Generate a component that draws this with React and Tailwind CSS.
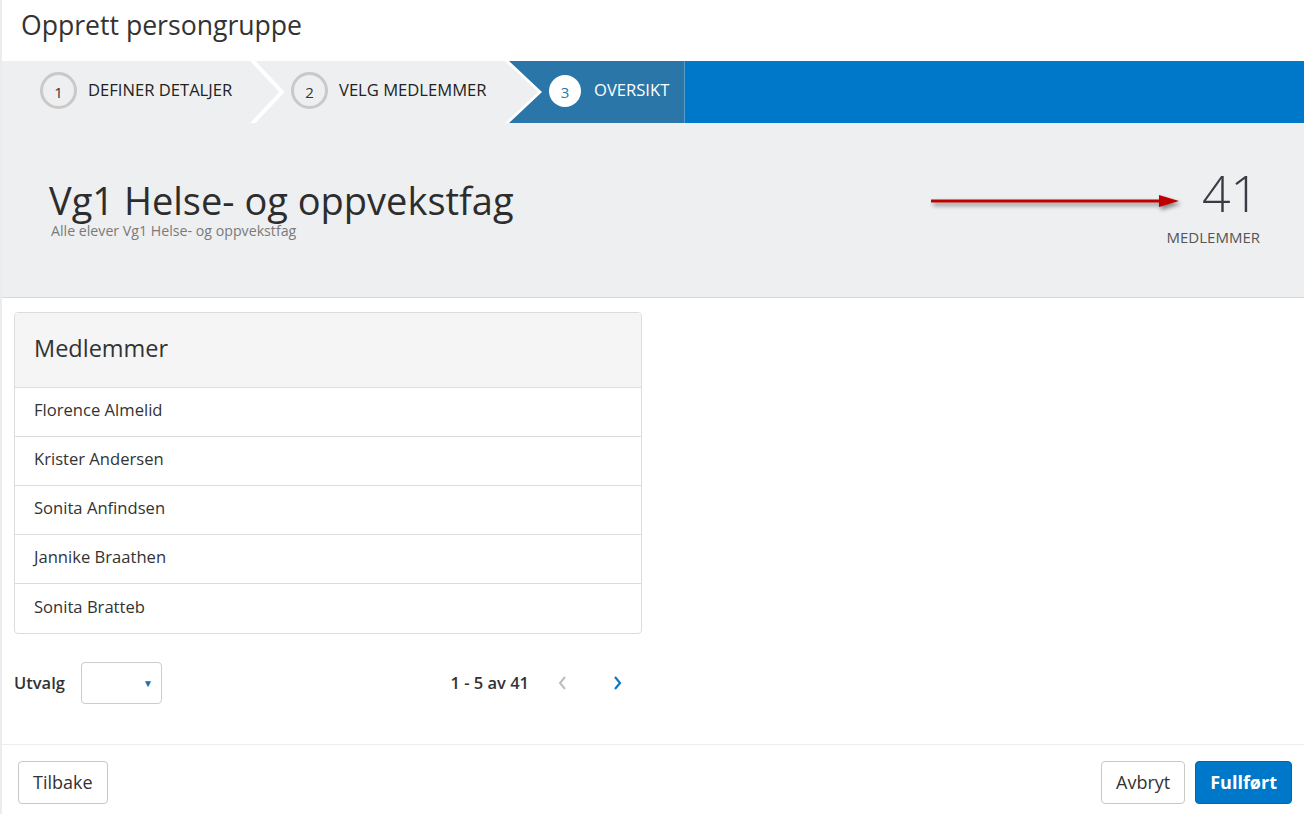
import React from 'react';

const members = [
    'Florence Almelid',
    'Krister Andersen',
    'Sonita Anfindsen',
    'Jannike Braathen',
    'Sonita Bratteb',
];

const StepCircle = ({ n }) => (
    <div className="w-[37px] h-[37px] shrink-0 rounded-full border-[3px] border-[#c9c9c9] flex items-center justify-center pt-[3px] text-[15px] text-[#333]">
        {n}
    </div>
);

const App = () => {
    return (
        <div className="w-full h-[814px] bg-white border-l-2 border-[#ececec] flex flex-col font-['Open_Sans',sans-serif] text-[#333] overflow-hidden">

            {/* -- PAGE TITLE -- */}
            <div className="h-[61px] flex items-center pl-[19px] pb-[10px]">
                <h1 className="text-[26.6px] text-[#333]">Opprett persongruppe</h1>
            </div>

            {/* -- STEPPER -- */}
            <div className="flex h-[62px]">
                <div className="flex items-center w-[246px] bg-[#eeeff1] pl-[38px] pb-[3px] gap-[11px]">
                    <StepCircle n={1} />
                    <span className="text-[16.6px] text-[#222]">DEFINER DETALJER</span>
                </div>
                <svg width="36" height="62" className="shrink-0 bg-[#eeeff1]">
                    <polyline points="2,-3 34,31 2,65" fill="none" stroke="#ffffff" strokeWidth="4" />
                </svg>
                <div className="flex items-center w-[221px] bg-[#eeeff1] pl-[7px] pb-[3px] gap-[11px]">
                    <StepCircle n={2} />
                    <span className="text-[16.6px] text-[#222]">VELG MEDLEMMER</span>
                </div>
                <div className="w-[179px] bg-[#eeeff1]">
                    <div className="h-full bg-white [clip-path:polygon(0_0,100%_0,100%_100%,0_100%,33px_50%)]">
                        <div className="h-full flex items-center bg-[#2b76a8] pl-[44px] pb-[3px] gap-[13px] [clip-path:polygon(4px_0,100%_0,100%_100%,4px_100%,37px_50%)]">
                            <div className="w-[32px] h-[32px] rounded-full bg-white flex items-center justify-center pt-[3px] text-[15px] text-[#2b76a8]">
                                3
                            </div>
                            <span className="text-[16.6px] text-white">OVERSIKT</span>
                        </div>
                    </div>
                </div>
                <div className="w-px bg-[#5a9cc9]" />
                <div className="flex-1 bg-[#0078c9]" />
            </div>

            {/* -- GROUP SUMMARY -- */}
            <div className="h-[175px] bg-[#eeeff1] border-b border-[#d8d8d8] flex items-center justify-between pl-[47px] pr-[44px]">
                <div className="flex flex-col">
                    <h2 className="text-[38px] leading-[38px] text-[#2d2d2d]">Vg1 Helse- og oppvekstfag</h2>
                    <p className="text-[14.2px] leading-[16px] text-[#7a7a7a] pl-[2px] mt-[4px]">Alle elever Vg1 Helse- og oppvekstfag</p>
                </div>
                <div className="flex flex-col items-end pb-[6px]">
                    <div className="flex items-center">
                        <svg width="256" height="16" className="drop-shadow-[2px_3px_2px_rgba(0,0,0,0.45)] mt-[18px]">
                            <line x1="2" y1="7" x2="234" y2="7" stroke="#c00000" strokeWidth="3" />
                            <polygon points="230,1 250,7 230,13" fill="#c00000" />
                        </svg>
                        <span className="ml-[17px] mr-[1px] text-[50px] leading-[56px] font-light text-[#3a3a44]">41</span>
                    </div>
                    <span className="mt-[5px] text-[15px] text-[#555]">MEDLEMMER</span>
                </div>
            </div>

            {/* -- MEMBER LIST -- */}
            <div className="px-[12px] pt-[14px]">
                <div className="w-[628px] border border-[#dcdcdc] rounded-[4px] overflow-hidden">
                    <div className="h-[75px] bg-[#f5f5f5] border-b border-[#dcdcdc] flex items-center px-[19px] pb-[3px]">
                        <h3 className="text-[23.5px] text-[#333]">Medlemmer</h3>
                    </div>
                    {members.map((name, i) => (
                        <div
                            key={name}
                            className={`h-[49px] flex items-center px-[19px] pb-[3px] text-[16.6px] text-[#333] ${i < members.length - 1 ? 'border-b border-[#dcdcdc]' : ''}`}
                        >
                            {name}
                        </div>
                    ))}
                </div>

                {/* -- PAGINATION -- */}
                <div className="w-[628px] mt-[28px] flex items-center justify-between">
                    <div className="flex items-center gap-[16px]">
                        <span className="text-[16.5px] font-semibold text-[#333]">Utvalg</span>
                        <div className="w-[81px] h-[42px] border border-[#cccccc] rounded-[4px] flex items-center justify-end pr-[8px]">
                            <span className="text-[10px] text-[#2a6aa0]">▼</span>
                        </div>
                    </div>
                    <div className="flex items-center pr-[19px]">
                        <span className="text-[16.5px] font-semibold text-[#333]">1 - 5 av 41</span>
                        <svg width="10" height="16" viewBox="0 0 10 16" className="ml-[28px]">
                            <polyline points="8,2 3,8 8,14" fill="none" stroke="#bdbdbd" strokeWidth="2" />
                        </svg>
                        <svg width="10" height="16" viewBox="0 0 10 16" className="ml-[46px]">
                            <polyline points="2,2 7,8 2,14" fill="none" stroke="#0b78c5" strokeWidth="2.2" />
                        </svg>
                    </div>
                </div>
            </div>

            {/* -- FOOTER -- */}
            <div className="mt-auto border-t border-[#eeeeee] h-[70px] flex items-center justify-between pl-[16px] pr-[12px] pt-[6px]">
                <button className="h-[43px] px-[14px] border border-[#c9c9c9] rounded-[4px] bg-white text-[18px] text-[#333]">
                    Tilbake
                </button>
                <div className="flex items-center gap-[10px]">
                    <button className="h-[43px] px-[14px] border border-[#c9c9c9] rounded-[4px] bg-white text-[18px] text-[#333]">
                        Avbryt
                    </button>
                    <button className="h-[43px] px-[14px] border border-[#0a66a8] rounded-[4px] bg-[#0078c9] text-[18px] font-bold text-white">
                        Fullført
                    </button>
                </div>
            </div>
        </div>
    );
};

export default App;
